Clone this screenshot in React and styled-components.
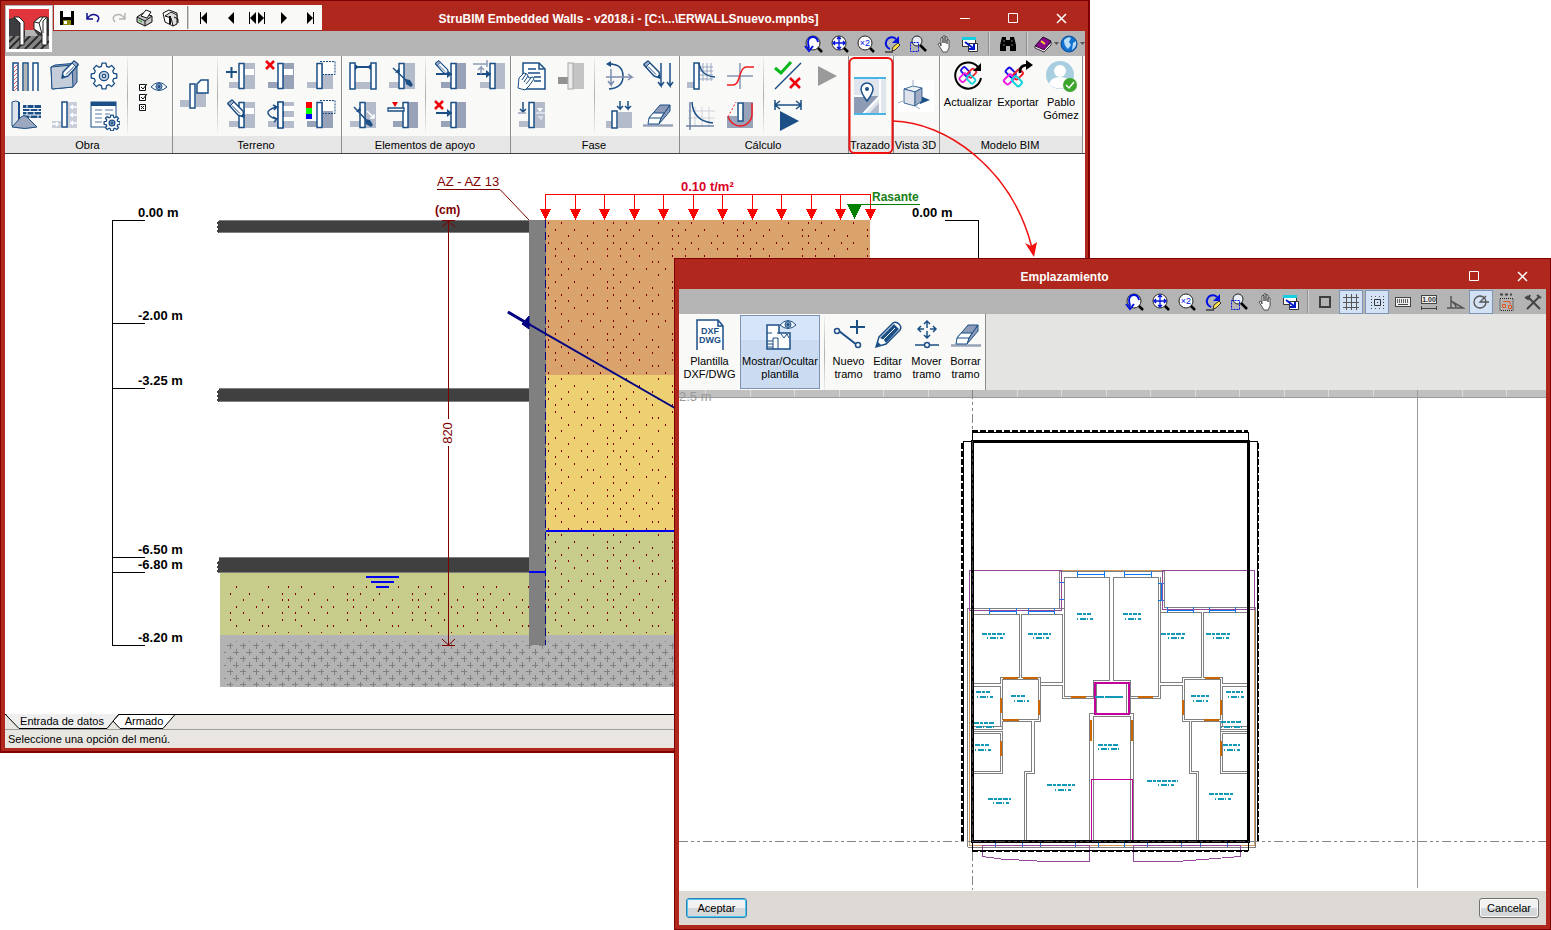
import React from 'react';
import styled, { createGlobalStyle } from 'styled-components';

const BLUE = '#1b4f86';
const SOIL = '#b4bbcb';
const DARK = '#98a3ba';

const GlobalStyle = createGlobalStyle`
  * {
    box-sizing: border-box;
  }
  body {
    margin: 0;
    background: #ffffff;
    color: #000000;
    font-family: "Liberation Sans", Arial, sans-serif;
    font-size: 11px;
    line-height: 13px;
  }
  button {
    font: inherit;
    color: inherit;
    background: none;
    border: 0;
    padding: 0;
  }
`

const Desktop = styled.div`
  position: relative;
  height: 100vh;
  min-height: 600px;
  overflow: hidden;
`

const Window = styled.section`
  position: absolute;
  display: flex;
  flex-direction: column;
  background: #b0281d;
  border: 1px solid #7f0000;
`

const MainWindow = styled(Window)`
  left: 0;
  top: 0;
  width: calc(100% - 461px);
  height: calc(100% - 177px);
  border-width: 1px 2px 2px 1px;
  padding: 4px 3px 3px 4px;
`

const DialogWindow = styled(Window)`
  left: 674px;
  right: 0;
  top: 258px;
  bottom: 0;
  padding: 0 4px 4px;
`

const MainHeader = styled.header`
  display: grid;
  grid-template-columns: 49px 1fr;
  grid-template-rows: 26px 25px;
  flex: none;
`

const AppButton = styled.button`
  grid-column: 1;
  grid-row: 1 / 3;
  z-index: 1;
  align-self: start;
  width: 48px;
  height: 48px;
  padding: 3px;
  background: #ffffff;
  border: 1px solid #b8b8b8;
  svg {
    display: block;
  }
`

const TitleRow = styled.div`
  grid-column: 2;
  grid-row: 1;
  display: flex;
`

const QuickAccess = styled.div`
  display: flex;
  align-items: center;
  height: 25px;
  background: #f9f9f7;
`

const Title = styled.h1`
  flex: 1;
  margin: 0;
  padding-top: 1px;
  padding-right: ${props => props.$inset || '0'};
  color: #ffffff;
  font-size: 12px;
  font-weight: bold;
  line-height: 26px;
  text-align: center;
  white-space: nowrap;
`

const WindowButton = styled.button`
  display: flex;
  align-items: center;
  justify-content: center;
  width: 48px;
  height: 26px;
  color: #ffffff;
`

const DialogTitle = styled.header`
  display: flex;
  align-items: center;
  flex: none;
  height: 30px;
  padding-top: 4px;
`

const ViewBar = styled.div`
  display: flex;
  align-items: center;
  justify-content: flex-end;
  flex: none;
  height: 25px;
  background: #b4b4b4;
`

const MainViewBar = styled(ViewBar)`
  grid-column: 1 / 3;
  grid-row: 2;
`

const SmallButton = styled.button`
  display: flex;
  align-items: center;
  justify-content: center;
  width: ${props => props.$wide ? '26px' : '24px'};
  height: 24px;
  margin: 0 ${props => props.$wide ? '0' : '1px'};
  border: 1px solid ${props => props.$on ? '#7d95b3' : 'transparent'};
  background: ${props => props.$on ? '#d3e1f4' : 'none'};
  svg {
    flex: none;
  }
`

const BarSeparator = styled.span`
  width: 2px;
  height: 23px;
  margin: 0 ${props => props.$gap || '3px'};
  background: linear-gradient(90deg, #8f8f8f 50%, #d0d0d0 50%);
`

const Ribbon = styled.nav`
  display: flex;
  flex: none;
  height: 98px;
  background: #f9f9f7;
  border-bottom: 1px solid #404040;
`

const Group = styled.div`
  display: flex;
  flex-direction: column;
  flex: none;
  width: ${props => props.$width};
  border-right: 1px solid #8c8c8c;
  box-shadow: inset 1px 0 0 #ffffff;
`

const GroupBody = styled.div`
  display: flex;
  justify-content: ${props => props.$center ? 'center' : 'flex-start'};
  height: 80px;
  padding: ${props => props.$center ? '0 2px 0 0' : '0 0 0 1px'};
`

const GroupLabel = styled.div`
  height: 17px;
  padding-right: 2px;
  background: #e6e6e6;
  line-height: 18px;
  text-align: center;
  white-space: nowrap;
`

const ToolGrid = styled.div`
  display: grid;
  grid-template-columns: repeat(${props => props.$cols}, 39px);
  grid-template-rows: ${props => props.$tall ? '78px' : '39px 39px'};
`

const ToolButton = styled.button`
  display: flex;
  align-items: center;
  justify-content: center;
`

const GroupSeparator = styled.span`
  width: 1px;
  height: 76px;
  margin: 1px 4px 0;
  background: linear-gradient(#f0f0f0, #b0b0b0 50%, #f0f0f0);
`

const CaptionButton = styled.button`
  display: flex;
  flex-direction: column;
  align-items: center;
  gap: 4px;
  width: ${props => props.$width || '39px'};
  padding-top: 3px;
  white-space: nowrap;
  border: 1px solid ${props => props.$on ? '#7c93b2' : 'transparent'};
  background: ${props => props.$on ? 'linear-gradient(#d6e5fa 33%, #cbdcf2 33%)' : 'none'};
`

const MainCanvas = styled.main`
  flex: 1;
  min-height: 0;
  background: #ffffff;
`

const TabRow = styled.div`
  display: flex;
  flex: none;
  height: 15px;
  background: #e9e6e1;
  border-top: 1px solid #000000;
`

const Tab = styled.button`
  position: relative;
  width: ${props => props.$width};
  height: 14px;
  margin-left: ${props => props.$overlap ? '-6px' : '0'};
  padding-bottom: 2px;
  line-height: 12px;
  white-space: nowrap;
`

const TabShape = styled.svg`
  position: absolute;
  left: 0;
  top: -1px;
`

const TabText = styled.span`
  position: relative;
`

const StatusBar = styled.footer`
  flex: none;
  height: 19px;
  padding-left: 3px;
  background: #e9e6e1;
  border-top: 1px solid #a0a0a0;
  line-height: 18px;
`

const DialogRibbon = styled.nav`
  display: flex;
  flex: none;
  height: 76px;
  background: #e4e4e2;
`

const DialogTools = styled.div`
  display: flex;
  padding: 1px 0;
  background: #f9f9f7;
  border-right: 1px solid #8c8c8c;
`

const DialogCanvas = styled.main`
  flex: 1;
  min-height: 0;
  background: #ffffff;
`

const DialogFooter = styled.footer`
  display: flex;
  align-items: center;
  justify-content: space-between;
  flex: none;
  height: 34px;
  padding: 0 7px;
  background: #dddad5;
`

const PushButton = styled.button`
  width: ${props => props.$primary ? '61px' : '60px'};
  height: 20px;
  border: 1px solid ${props => props.$primary ? '#2f7fb5' : '#707070'};
  border-radius: 3px;
  background: linear-gradient(#f2f2f2 50%, #d4d8da 50%);
  box-shadow: ${props => props.$primary ? 'inset 0 0 0 1px #49c8f2' : 'inset 0 0 0 1px #fafafa'};
`

const Drawing = styled.svg`
  display: block;
  width: 100%;
  height: 100%;
`

const DrawingText = styled.text`
  font-family: "Liberation Sans", Arial, sans-serif;
  font-size: ${props => props.$size || '13px'};
  font-weight: ${props => props.$bold ? 'bold' : 'normal'};
`

const Callout = styled.svg`
  position: absolute;
  left: 0;
  top: 0;
  pointer-events: none;
`

// ---- shared icon pieces, all on a 32 x 32 grid ----

function Section({ x = 13, soil = SOIL, band = true, ground = soil }) {
  return (
    <g>
      <rect x={x + 5} y="3" width="11" height="26" fill={soil} />
      {band && <rect x={x + 6} y="9" width="9" height="6" fill="#fff" />}
      <rect x={x - 10} y="22" width="10" height="6" fill={ground} />
      <rect x={x} y="3.500" width="5" height="25" fill="#fff" stroke={BLUE} strokeWidth="1.500" />
    </g>
  );
}

function Pencil() {
  return (
    <g stroke={BLUE} strokeLinejoin="round">
      <path d="M2 4L6 1L17 12L18 18L12 16L2 5Z" fill="#fff" strokeWidth="1.500" />
      <path d="M2 4L6 1L8 3L4 7Z" fill="#9dacc4" />
      <path d="M6 6.500L14 14.500" fill="none" />
      <path d="M18 18l-3-1l2-2z" fill={BLUE} />
    </g>
  );
}

function RedCross({ x = 1, y = 1, s = 8 }) {
  return <path d={`M${x} ${y}l${s} ${s}m0 ${-s}l${-s} ${s}`} stroke="#f0000b" strokeWidth="2.500" fill="none" />;
}

function Eye({ x, y }) {
  return (
    <g transform={`translate(${x} ${y})`}>
      <path d="M0 5Q8 -4 16 5Q8 12 0 5Z" fill="#fff" stroke={BLUE} />
      <circle cx="8" cy="4.500" r="3" fill="#8fa6c4" stroke={BLUE} />
      <circle cx="8" cy="4.500" r="1.500" fill={BLUE} />
    </g>
  );
}

function gearPath(cx, cy, r, depth) {
  const pts = [];
  for (let i = 0; i < 8; i++) {
    [[-15, r - depth], [-9, r], [9, r], [15, r - depth]].forEach(([a, rad]) => {
      const t = (i * 45 + a) * Math.PI / 180;
      pts.push(`${(cx + rad * Math.cos(t)).toFixed(1)} ${(cy + rad * Math.sin(t)).toFixed(1)}`);
    });
  }
  return `M${pts.join('L')}Z`;
}

function Gear({ cx = 16, cy = 16, r = 13, depth = 3 }) {
  return (
    <g fill="#fff" stroke={BLUE} strokeWidth="1.300" strokeLinejoin="round">
      <path d={gearPath(cx, cy, r, depth)} />
      <circle cx={cx} cy={cy} r={r * 0.36} fill="#c9d1df" />
      <circle cx={cx} cy={cy} r={r * 0.13} />
    </g>
  );
}

function Eraser() {
  return (
    <g stroke={BLUE} strokeWidth="1" strokeLinejoin="round">
      <path d="M1 26.500H31" stroke={DARK} strokeWidth="2.500" />
      <path d="M7 19L18 6H28L19 19Z" fill="#8d9ab8" />
      <path d="M19 19L28 6V12L17 25Z" fill="#8d9ab8" />
      <path d="M7 19L11 14H22L19 19L17 25H6Z" fill="#fff" />
      <path d="M7 19H19" />
    </g>
  );
}

function Knot() {
  return (
    <g fill="none" strokeWidth="2.200">
      <rect x="-5" y="-3" width="11" height="7" rx="2" transform="translate(13 10) rotate(45)" stroke="#1a12e6" />
      <rect x="-6" y="-3" width="11" height="7" rx="2" transform="translate(21 12) rotate(-45)" stroke="#f0202c" />
      <rect x="-5" y="-4" width="11" height="7" rx="2" transform="translate(11 19) rotate(-45)" stroke="#f01ae0" />
      <rect x="-6" y="-4" width="11" height="7" rx="2" transform="translate(20 21) rotate(45)" stroke="#10d4d8" />
    </g>
  );
}

function Lens({ children }) {
  return (
    <g>
      <path d="M13 13L18 18" stroke="#000" strokeWidth="2.500" />
      <circle cx="9" cy="9" r="7" fill="#fff" stroke="#222" />
      {children}
    </g>
  );
}

const line = { fill: 'none', stroke: BLUE, strokeWidth: 1.5 };

const icons = {
  piles: <>
    <path d="M3 31V3H8V31M13 31V3H18V31M23 31V3H28V31" fill="#fff" stroke={BLUE} strokeWidth="1.500" />
    <rect x="14" y="4" width="3" height="27" fill="#b5b5b5" />
    <path d="M4 8l3-3M4 12l3-3M4 16l3-3M4 20l3-3M4 24l3-3M4 28l3-3M4 31l3-3" stroke="#ef5350" />
  </>,
  panel: <>
    <path d="M2 7L6 5L28 3V22L24 27L3 29Z" fill="#8f9db8" stroke={BLUE} />
    <path d="M2 7L23 5L24 27L3 29Z" fill="#c5ccda" stroke={BLUE} />
    <g transform="translate(31 0) scale(-1 1)"><Pencil /></g>
  </>,
  gear: <Gear />,
  materials: <>
    <path d="M13 6H31V19H13Z" fill={BLUE} />
    <path d="M13 9.500H31M13 12.500H31M13 16H31M17 6v3M24 6v3M20 10v3M28 10v3M17 13v3M24 13v3M20 16v3M28 16v3" stroke="#fff" />
    <path d="M2 3Q6 1 9 3V27H2Z" fill="#dfe4ec" stroke={BLUE} />
    <path d="M9 3V27" stroke={BLUE} strokeWidth="2" />
    <path d="M2 28L11 18Q14 15 17 18L27 28Q15 31 2 28Z" fill="#9ba8bf" stroke={BLUE} />
  </>,
  rock: <>
    <path d="M18 3h10v26H18zM3 22h9v7H3z" fill="#c9cedb" />
    <path d="M28 8h-6l2-2m-2 2l2 2M28 16h-6l2-2m-2 2l2 2M28 24h-6l2-2m-2 2l2 2M3 25h6l-2-2m2 2l-2 2" fill="none" stroke="#fff" strokeWidth="1.500" />
    <rect x="13" y="3" width="5" height="25" fill="#fff" stroke={BLUE} strokeWidth="1.500" />
  </>,
  table: <>
    <rect x="3" y="3" width="25" height="25" fill="#fff" stroke={BLUE} />
    <rect x="3" y="3" width="25" height="4" fill={BLUE} />
    <path d="M7 11h7m3 0h8M7 15h7m3 0h5M7 19h7m3 0h3M7 23h7" stroke="#5779a4" />
    <Gear cx={24} cy={24} r={8} depth={2} />
  </>,
  options: <>
    <g fill="#fff" stroke="#111"><path d="M3.500 8.500h6v6h-6zM3.500 18.500h6v6h-6zM3.500 28.500h6v6h-6z" /></g>
    <path d="M5 11l2 2l4-5M5 21l2 2l4-5M5 30l3 3m0-3l-3 3" fill="none" stroke="#111" />
    <Eye x={15} y={6} />
  </>,
  wallPage: <>
    <path d="M18 12h10v16H18zM2 21h9v7H2z" fill={SOIL} />
    <rect x="12" y="5" width="5" height="24" fill="#fff" stroke={BLUE} strokeWidth="1.500" />
    <path d="M19 5l4-4h7v13H19z" fill="#fff" stroke={BLUE} strokeWidth="1.500" />
  </>,
  wallAdd: <><Section /><path d="M0 12h11M5.500 7v11" fill="none" stroke={BLUE} strokeWidth="2" /></>,
  wallDelete: <><Section soil={DARK} /><RedCross /></>,
  wallFrame: <><Section band={false} /><rect x="19" y="3" width="10" height="11" fill="#fff" /><path d="M16 1.500h15v13H19" fill="none" stroke={BLUE} strokeDasharray="2 1" /></>,
  wallEdit: <><Section /><Pencil /></>,
  wallArc: <><Section band={false} /><path d="M18 7h11v5H18zM18 18h11v4H18z" fill="#fff" /><rect x="13" y="3" width="5" height="26" fill="#fff" stroke={BLUE} strokeWidth="1.500" /><path d="M11 8Q2 11 3 14Q4 18 11 20M8 6l4 2l-3 3M8 18l4 2l-3 3" {...line} /></>,
  wallColor: <>
    <Section band={false} soil={DARK} /><rect x="19" y="3" width="10" height="9" fill="#fff" />
    <path d="M16 1.500h15v13H19" fill="none" stroke={BLUE} strokeDasharray="2 1" />
    <rect x="2" y="3" width="6" height="6" fill="#f00" /><rect x="2" y="9" width="6" height="6" fill="#0f0" /><rect x="2" y="15" width="6" height="5" fill="#00f" />
  </>,
  strut: <>
    <path d="M8 22h16v7H8z" fill={SOIL} />
    <path d="M8 7H24" stroke={BLUE} strokeWidth="2" /><path d="M8 4l4 3l-4 3M24 4l-4 3l4 3" fill={BLUE} />
    <rect x="3" y="3" width="5" height="26" fill="#fff" stroke={BLUE} strokeWidth="1.500" /><rect x="24" y="3" width="5" height="26" fill="#fff" stroke={BLUE} strokeWidth="1.500" />
  </>,
  anchor: <><Section band={false} /><path d="M7 8L24 24" fill="none" stroke={BLUE} strokeWidth="1.500" /><path d="M19 19l5 1l3 5l-2 2l-5-3zM14 12l-5 1l4-5z" fill={BLUE} /></>,
  anchorEdit: <><Section band={false} /><path d="M7 8L23 25" fill="none" stroke={BLUE} strokeWidth="1.500" /><path d="M18 20l5 1l3 5l-2 2l-5-3zM14 12l-5 1l4-5z" fill={BLUE} /><path d="M20 12l7 7m0-4v4h-4" fill="none" stroke="#fff" strokeWidth="1.500" /></>,
  slab: <><Section x={17} band={false} soil={DARK} /><path d="M2 9h16v3H2z" fill="#fff" stroke={BLUE} strokeWidth="1.300" /><path d="M6 3h6l-3 5z" fill="#e8000b" /></>,
  strutEdit: <><Section x={17} band={false} soil={DARK} /><path d="M2 14h16" fill="none" stroke={BLUE} strokeWidth="2" /><path d="M13 10l5 4l-5 4z" fill={BLUE} /><g transform="scale(.8)"><Pencil /></g></>,
  strutMove: <><Section x={17} band={false} /><path d="M4 14h14" fill="none" stroke={BLUE} strokeWidth="2" /><path d="M13 10l5 4l-5 4z" fill={BLUE} /><path d="M0 4h14M14 0v7M8 14V7l-3 3m3-3l3 3" fill="none" stroke="#8d9ab8" strokeWidth="1.500" /></>,
  strutDelete: <><Section x={17} band={false} soil={DARK} /><path d="M2 14h16" fill="none" stroke={BLUE} strokeWidth="2" /><path d="M13 10l5 4l-5 4z" fill={BLUE} /><RedCross y={2} /></>,
  phases: <>
    <path d="M7 3h16l6 6v20H7z" fill="#fff" stroke={BLUE} strokeWidth="1.500" /><path d="M23 3v6h6M12 9h8M12 13h12M18 17h7M18 21h7" {...line} />
    <path d="M2 28L3 18L8 13L11 14L13 18L17 17L18 19L13 26L9 30Z" fill="#fff" stroke={BLUE} /><path d="M6 20l4-6M8 22l4-6M10 24l5-6" stroke={BLUE} />
  </>,
  grayWall: <><path d="M18 3h11v26H18z" fill="#c4c4c4" /><path d="M3 17h10v7H3z" fill="#929292" /><rect x="13" y="3" width="5" height="26" fill="#ececec" stroke="#a6a6a6" /></>,
  water: <><Section x={13} band={false} /><path d="M7 3v10m-3-3l3 3l3-3" {...line} /><path d="M2 14h8" stroke={DARK} strokeWidth="1.500" /><path d="M20 14h9M22 18h5M24 20h2" stroke="#fff" /><path d="M21 9h6l-3 4z" fill="#fff" /></>,
  rotate: <><path d="M6 4Q20 4 20 16Q20 28 6 29M4 4h6" {...line} /><path d="M3 4l5-3v6z" fill={BLUE} /><path d="M3 17h26l-4-3m4 3l-4 3M8 9v16l-3-4m3 4l3-4" fill="none" stroke="#7d8fae" strokeWidth="1.500" /></>,
  loads: <><Pencil /><path d="M19 3v23l-3-4m3 4l3-4M28 3v23l-3-4m3 4l3-4" {...line} /></>,
  surcharge: <><path d="M15 13h14v16H15zM3 22h6v7H3z" fill={SOIL} /><rect x="9" y="12" width="5" height="17" fill="#fff" stroke={BLUE} strokeWidth="1.500" /><path d="M17 2v8l-3-3m3 3l3-3M25 2v8l-3-3m3 3l3-3" {...line} /></>,
  eraser: <Eraser />,
  pressure: <><path d="M14 3v18M18 3v18M22 3v18M26 3v18M12 7h16M12 11h16M12 15h16M12 19h16" stroke="#9ba8c0" /><path d="M2 22h8v6H2z" fill={SOIL} /><rect x="9" y="3" width="5" height="26" fill="#fff" stroke={BLUE} strokeWidth="1.500" /><path d="M14 3Q16 16 30 17" {...line} /></>,
  curve: <><path d="M16 3v26M3 16h26" stroke="#8597b5" strokeWidth="1.500" /><path d="M3 25h6Q13 25 15 18Q18 7 22 7h8" fill="none" stroke="#f11b20" strokeWidth="1.500" /></>,
  graph: <><path d="M10 8v20M17 8v20M24 8v20M3 12h27M3 19h27" stroke="#d0d3da" /><path d="M5 3v28M1 27h28" fill="none" stroke="#6d82a5" strokeWidth="1.500" /><path d="M7 3Q8 22 28 24" {...line} /></>,
  slip: <>
    <path d="M3 17H13V22H19V3H29V29H3Z" fill={DARK} />
    <path d="M14 4h5v18h-5z" fill="#fff" stroke={BLUE} strokeWidth="1.500" />
    <path d="M28 4V15A12 12 0 0 1 16 27Q8 27 4 18" fill="none" stroke="#f11b20" strokeWidth="1.500" />
    <path d="M4 18L12 3" stroke="#f11b20" strokeDasharray="2 2" />
  </>,
  check: <><path d="M3 29L29 3" stroke={BLUE} strokeWidth="1.500" /><path d="M3 8l6 5L19 2" fill="none" stroke="#08b81b" strokeWidth="3" /><RedCross x={18} y={18} s={10} /></>,
  play: <path d="M7 6L26 16L7 26Z" fill="#9a9a9a" />,
  calc: <><path d="M8 12L27 22L8 32Z" fill={BLUE} /><path d="M3 1v10M29 1v10M3 6h26M8 2l-5 4l5 4M24 2l5 4l-5 4" {...line} /></>,
  map: <>
    <rect width="32" height="38" fill="#dfe4ed" />
    <path d="M0 19H24V21L8 38H0Z" fill="#8e9bb5" />
    <path d="M14 38L25 26V38Z" fill="#b3bccd" />
    <path d="M26 2V38M25 20L9 37M0 19H13" fill="none" stroke="#fff" strokeWidth="2" />
    <path d="M0 1h32M0 37h32" stroke="#4bb4e6" strokeWidth="2" />
    <path d="M13 24Q7 16 7 12A6 6 0 0 1 19 12Q19 16 13 24Z" fill="#fff" stroke={BLUE} strokeWidth="1.500" /><circle cx="13" cy="12" r="2" fill={BLUE} />
  </>,
  cube: <>
    <rect width="36" height="32" fill="#fff" /><path d="M20 15l12 5l-10 4z" fill={BLUE} />
    <g stroke={BLUE} strokeWidth=".8"><path d="M6 9l9-3l9 2l-7 4z" fill="#eef1f6" /><path d="M6 9l11 3v14L6 23z" fill="#dfe3eb" /><path d="M24 8v13l-7 5V12z" fill="#9facc4" /></g>
    <path d="M15 0v5M0 23l5-2M17 26l5 3" stroke="#9facc4" />
  </>,
  update: <><g transform="translate(3 3) scale(.8)"><Knot /></g><path d="M26 7A13 13 0 1 0 29 18" fill="none" stroke="#000" strokeWidth="2" /><path d="M29 3v8h-8z" /></>,
  exportModel: <><g transform="translate(-3 3) scale(.9)"><Knot /></g><path d="M18 13Q17 5 26 5" fill="none" stroke="#000" strokeWidth="2.500" /><path d="M24 0l7 5l-7 5z" /></>,
  user: <>
    <circle cx="15" cy="15" r="14" fill="#a8cfe0" /><circle cx="15" cy="11" r="6" fill="#fff" /><path d="M4 24Q6 17 15 17T26 24Q15 33 4 24Z" fill="#fff" />
    <circle cx="25" cy="25" r="7" fill="#3da52d" /><path d="M21 25l3 3l5-6" fill="none" stroke="#fff" strokeWidth="1.500" />
  </>,
  dxf: <>
    <path d="M3 31V1H24L29 7V31" fill="#fff" stroke={BLUE} strokeWidth="1.500" /><path d="M24 1v6h5" {...line} />
    <text x="16" y="15" textAnchor="middle" fontFamily="Liberation Sans" fontWeight="bold" fontSize="9" fill={BLUE}>DXF</text>
    <text x="16" y="24" textAnchor="middle" fontFamily="Liberation Sans" fontWeight="bold" fontSize="9" fill={BLUE}>DWG</text>
  </>,
  plan: <><path d="M3 6h12v8h11v16H3z" fill="#fff" stroke={BLUE} strokeWidth="1.500" /><path d="M3 14h5M13 14h3M3 22h6v-3h5v11M9 22v8M3 25h6M3 28h6M17 15l3 4l3-4l2 4" fill="none" stroke={BLUE} /><Eye x={16} y={1} /></>,
  newLine: <><path d="M6 12L24 26" stroke={BLUE} strokeWidth="2" /><circle cx="4" cy="12" r="2.500" fill="#fff" stroke={BLUE} strokeWidth="1.500" /><circle cx="25" cy="26" r="2.500" fill="#fff" stroke={BLUE} strokeWidth="1.500" /><path d="M24 1v14M17 8h15" stroke={BLUE} strokeWidth="2" /></>,
  pencil: <>
    <path d="M4 28L7 18L21 4Q24 2 27 5T28 11L14 25Z" fill="#fff" stroke={BLUE} strokeWidth="1.500" />
    <path d="M22 5L27 10L14 24L12 21L8 19Z" fill={BLUE} />
    <path d="M23 9L11 21" stroke="#fff" /><path d="M4 28l2-5l3 3z" fill={BLUE} />
  </>,
  move: <><path d="M16 2v7M16 12v7M7 10h6M19 10h6M13 5l3-3l3 3M13 16l3 3l3-3M10 7l-3 3l3 3M22 7l3 3l-3 3M4 26h9M19 26h9" {...line} /><circle cx="16" cy="26" r="2.500" {...line} /></>,
};

const smallIcons = {
  save: <><path d="M3 3h14v14H3z" fill="#000" /><path d="M6 3h8v6H6z" fill="#fff" /><path d="M6 12h8v5H6z" fill="#8a8a00" /><path d="M7 13h3v3H7z" fill="#fff" /></>,
  undo: <path d="M4 5v6h6M4 11Q8 5 13 7T14 14" fill="none" stroke="#101090" strokeWidth="1.500" />,
  redo: <path d="M16 5v6h-6M16 11Q12 5 7 7T6 14" fill="none" stroke="#b5b5b5" strokeWidth="1.500" />,
  printer: <g stroke="#111"><path d="M2 9l6-4l9 3v6l-7 4l-8-4z" fill="#c4c4c4" /><path d="M6 8l5-6l5 2l-4 6z" fill="#fff" /><path d="M2 9l8 4l7-5M10 13v5" fill="none" /><path d="M4 12l3 2" stroke="#0b0" /></g>,
  preview: <g stroke="#111" fill="#fff"><path d="M2 5l6-3l8 3v9l-4 4l-8-4z" /><path d="M4 8l6-4l6 3v9l-4 2l-2-8z" fill="#ddd" /><path d="M13 9l4 2v4" fill="none" /><path d="M9 8v8" strokeWidth="2" /></g>,
  first: <path d="M5 4h1v12H5zM12 4v12l-6-6z" />,
  prev: <path d="M13 4v12l-6-6z" />,
  middle: <path d="M2 4h1v12H2zM9 4v12l-6-6zM11 4v12l6-6zM17 4h1v12h-1z" />,
  next: <path d="M8 4v12l6-6z" />,
  last: <path d="M8 4v12l6-6zM14 4h1v12h-1z" />,
  zoomPrev: <Lens><path d="M5 14Q2 3 9 3Q13 3 14 8M1 12l4 5l4-5" fill="none" stroke="#0010e0" strokeWidth="2" /></Lens>,
  zoomAll: <Lens><path d="M9 3v12M3 9h12M7 5l2-2l2 2M7 13l2 2l2-2M5 7l-2 2l2 2M13 7l2 2l-2 2" fill="none" stroke="#0010e0" strokeWidth="1.300" /></Lens>,
  zoomTwo: <Lens><text x="9" y="12" textAnchor="middle" fontFamily="Liberation Sans" fontSize="9" fill="#0010e0">×2</text></Lens>,
  redraw: <><path d="M8 15A6 6 0 1 1 14 5" fill="none" stroke="#0010e0" strokeWidth="2" /><path d="M17 2v7h-7z" fill="#0010e0" /><path d="M10 17l1-4l5-4l2 2l-5 5z" fill="#ffe34a" stroke="#333" /><path d="M3 18h8" stroke="#000" /></>,
  zoomArea: <><path d="M12 11L18 17" stroke="#000" strokeWidth="2.500" /><circle cx="9" cy="7" r="5" fill="#e7eef8" stroke="#222" /><path d="M2.500 8.500h8v9h-8z" fill="none" stroke="#0010e0" strokeDasharray="2 1" /></>,
  hand: <path d="M4 10l2-1l1 3V4q1-2 2 0v5V2q1-1 2 0v7V3q1-1 2 0v7V6q1-1 2 0v8l-2 4H9z" fill="#fff" stroke="#333" strokeWidth=".8" />,
  windows: <><path d="M2.500 3.500h13v9h-13z" fill="#fff" stroke="#333" /><path d="M2 3h14v3H2z" fill="#15cfe0" /><path d="M8.500 9.500h9v8h-9z" fill="#fff" stroke="#333" /><path d="M5 8l8 6m1-4v5H9" fill="none" stroke="#0018c8" strokeWidth="2" /></>,
  binoculars: <><path d="M4 3h4v3h4V3h4l2 8v6h-6v-5H8v5H2v-6z" fill="#000" /><path d="M6 6v8M14 6v8" stroke="#777" strokeDasharray="2 2" /></>,
  book: <><path d="M1 12L9 3l8 4l-7 10z" fill="#8a0a8e" stroke="#200020" /><path d="M1 12l9 4l7-8v3l-7 7l-9-4z" fill="#fff" stroke="#200020" strokeWidth=".8" /><path d="M7 7l4 3" stroke="#f6d32d" strokeWidth="2" /></>,
  globe: <><circle cx="9" cy="10" r="8" fill="#1272cf" stroke="#0d4f99" /><path d="M4 6q4-4 7-2l-2 4l2 3l-3 4q-4-3-4-9zM13 9l3-2q1 6-4 9z" fill="#b9def7" /></>,
  square: <path d="M5 5h10v10H5z" fill="none" stroke="#3f3f3f" strokeWidth="2" />,
  grid: <path d="M5.500 2v16M10.500 2v16M15.500 2v16M2 5.500h16M2 10.500h16M2 15.500h16" stroke="#555" />,
  snap: <><path d="M7.500 7.500h6v6h-6z" fill="none" stroke="#333" /><path d="M4 4.500h14M4 16.500h14" stroke="#555" strokeDasharray="1 3" /><path d="M4 10.500h1M16 10.500h1M10 10.500h1M4 7.500h1M16 7.500h1M4 13.500h1M16 13.500h1" stroke="#333" /></>,
  keyboard: <><rect x="2.500" y="5.500" width="15" height="9" fill="#eee" stroke="#444" /><path d="M4 8h12M4 10h12" stroke="#333" strokeWidth="1.500" strokeDasharray="1 1" /><path d="M5 12.500h10" stroke="#444" /></>,
  measure: <><rect x="2.500" y="3.500" width="15" height="8" fill="#eee" stroke="#444" /><text x="10" y="10" textAnchor="middle" fontFamily="Liberation Sans" fontWeight="bold" fontSize="7" fill="#333">1.00</text><path d="M2.500 14v4M17.500 14v4M2 16.500h16" stroke="#444" /></>,
  angle: <path d="M6 4v12h12L6 9M2 16h5M11 16q0-4-3-5" fill="none" stroke="#555" strokeWidth="1.500" />,
  polar: <><circle cx="9" cy="10" r="6" fill="none" stroke="#555" strokeWidth="1.300" /><path d="M18 10H9l6-6" fill="none" stroke="#555" strokeWidth="1.300" /></>,
  region: <><path d="M3 6.500h13v12h-13z" fill="none" stroke="#222" strokeDasharray="1 1" /><path d="M3 2.500h12" fill="none" stroke="#444" strokeWidth="2" strokeDasharray="3 2" /><path d="M6 9.500h7v3M5.500 12.500h3v3h-3zM11.500 13.500h3v3h-3z" fill="none" stroke="#e2561f" /></>,
  tools: <path d="M4 4l13 13M4 17L17 4M2 5l3 2l2-4M14 3l4 3" fill="none" stroke="#444" strokeWidth="2" />,
};

function Icon({ name, width = 32, height = 32 }) {
  return <svg width={width} height={height} viewBox={`0 0 ${width} ${height}`} aria-hidden="true">{icons[name]}</svg>;
}

function SmallIcon({ name }) {
  return <svg width="20" height="20" viewBox="0 0 20 20" aria-hidden="true">{smallIcons[name]}</svg>;
}

function SmallTool({ name, label, on, menu }) {
  return (
    <SmallButton $on={on} $wide={menu} aria-label={label}>
      <SmallIcon name={name} />
      {menu && <svg width="5" height="3" aria-hidden="true"><path d="M0 0h5l-2.500 3z" fill="#555" /></svg>}
    </SmallButton>
  );
}

function ViewTools() {
  return (
    <>
      <SmallTool name="zoomPrev" label="Vista previa" />
      <SmallTool name="zoomAll" label="Ventana completa" />
      <SmallTool name="zoomTwo" label="Zoom doble" />
      <SmallTool name="redraw" label="Redibujar" />
      <SmallTool name="zoomArea" label="Marcar zoom" />
      <SmallTool name="hand" label="Mover la imagen" />
      <SmallTool name="windows" label="Imprimir vista" />
    </>
  );
}

function Tools({ names, cols, tall }) {
  return (
    <ToolGrid $cols={cols} $tall={tall}>
      {names.map(name => (
        <ToolButton key={name} aria-label={name}><Icon name={name} height={name === 'options' ? 38 : 32} /></ToolButton>
      ))}
    </ToolGrid>
  );
}

function Logo() {
  return (
    <svg width="40" height="40" viewBox="0 0 40 40" aria-hidden="true">
      <rect width="40" height="40" fill="#e0353b" />
      <path d="M0 10L6 8L13 14V22H25V12L31 8L40 9V40H0Z" fill="#3b3d40" />
      <path d="M0 27H40V40H0Z" fill="#858585" />
      <path d="M0 33l6-6M0 40l13-13M8 40l13-13M16 40l13-13M24 40l13-13M32 40l8-8" stroke="#2a2a2a" strokeWidth="2" />
      <path d="M16 21h9l4 6H16z" fill="#b5b5b5" />
      <path d="M5 8h5l5 5v23h-4V14z" fill="#fff" stroke="#222" />
      <path d="M31 8h7v28h-5V25l-8-5v-7z" fill="#fff" stroke="#222" />
      <path d="M25 13l5 1l3 11M30 14l4-6M34 24V12l4-4" fill="none" stroke="#222" />
    </svg>
  );
}

const levels = [
  { y: 220, text: '0.00 m' },
  { y: 323, text: '-2.00 m' },
  { y: 388, text: '-3.25 m' },
  { y: 557, text: '-6.50 m' },
  { y: 572, text: '-6.80 m' },
  { y: 645, text: '-8.20 m' },
];

const slabs = [[220, 13], [388, 14], [557, 16]];

const grains = [
  [0, [3, 16, 48]], [7, [10, 29, 62]], [13, [3, 23, 42, 62]], [20, [3, 16, 36, 48]],
  [26, [10, 23, 42, 62]], [33, [10, 29, 62]], [39, [16, 42, 48]], [46, [3, 23, 36, 55]],
];

function SectionDrawing() {
  return (
    <Drawing role="img" aria-label="Sección del muro">
      <defs>
        <pattern id="grain" x="220" y="586" width="65" height="52" patternUnits="userSpaceOnUse">
          {grains.map(([y, xs]) => xs.map(x => <rect key={`${x}-${y}`} x={x} y={y} width="1" height="2" fill="#800000" />))}
        </pattern>
        <pattern id="rocks" x="223" y="642" width="13" height="13" patternUnits="userSpaceOnUse">
          <path d="M4 3.500h6M7.500 1v6M0 10.500h3M10 10.500h3M.500 7v6" stroke="#808080" />
        </pattern>
      </defs>
      <g transform="translate(-5 -154)" shapeRendering="crispEdges">
        <rect x="545" y="220" width="325" height="155" fill="#d9a36b" />
        <rect x="545" y="375" width="325" height="156" fill="#ecd071" />
        <rect x="545" y="531" width="325" height="104" fill="#c8cc8a" />
        <rect x="220" y="572" width="310" height="63" fill="#c8cc8a" />
        <rect x="545" y="222" width="325" height="411" fill="url(#grain)" />
        <rect x="225" y="584" width="304" height="49" fill="url(#grain)" />
        <rect x="220" y="635" width="650" height="52" fill="#b3b3b3" />
        <rect x="224" y="641" width="646" height="46" fill="url(#rocks)" />
        <rect x="545" y="530" width="325" height="2" fill="#0000f0" />

        {slabs.map(([y, h]) => (
          <g key={y}>
            <path d={`M219 ${y}H530V${y + h}H219l-3 -2l3 -2l-3 -2l3 -2l-3 -2l3 -2Z`} fill="#404040" />
            <path d={`M219 ${y + .5}H530M219 ${y + h - .5}H530`} stroke="#808080" />
          </g>
        ))}

        <rect x="529" y="220" width="17" height="425" fill="#808080" />
        <path d="M545.500 220V645" stroke="#000080" strokeDasharray="8 4" />
        <rect x="529" y="571" width="17" height="2" fill="#0000f0" />
        <path d="M366 577H399M371 582H394M376 587H389" stroke="#0000f0" strokeWidth="2" />

        <path d="M112.500 220V646M978.500 220V400M945 220.500H979" stroke="#000" />
        {levels.map(({ y, text }) => (
          <g key={text}>
            <path d={`M112 ${y + .5}H145`} stroke="#000" />
            <DrawingText $bold x="138" y={y - 3}>{text}</DrawingText>
          </g>
        ))}
        <DrawingText $bold x="912" y="217">0.00 m</DrawingText>

        <g stroke="#800000" fill="none">
          <path d="M448.500 220V419M448.500 446V645M442 220.500H455M442 645.500H455" />
          <path d="M442 227L448.500 221L455 227M442 639L448.500 645L455 639M437 189.500H500L529 220" shapeRendering="auto" />
        </g>
        <DrawingText fill="#800000" x="437" y="186">AZ - AZ 13</DrawingText>
        <DrawingText $bold $size="12px" fill="#800000" x="435" y="214">(cm)</DrawingText>
        <DrawingText fill="#800000" textAnchor="middle" transform="translate(452 433) rotate(-90)">820</DrawingText>

        <path d="M545 194.500H871" stroke="#f00" />
        {Array.from({ length: 12 }, (_, i) => Math.round(545 + i * 29.5)).map(x => (
          <g key={x}>
            <path d={`M${x + .5} 194V210`} stroke="#f00" />
            <path d={`M${x - 5} 209H${x + 6}L${x + .5} 220Z`} fill="#f00" />
          </g>
        ))}
        <DrawingText $bold fill="#dc0028" x="681" y="191">0.10 t/m²</DrawingText>
        <path d="M847 204H862L854.500 219Z" fill="#008000" />
        <path d="M854 204.500H920" stroke="#008000" />
        <DrawingText $bold $size="12px" fill="#168016" x="872" y="201">Rasante</DrawingText>

        <g shapeRendering="auto" stroke="#000080" fill="#000080">
          <path d="M508 312L680 411" strokeWidth="2" />
          <path d="M508 312L530 325" strokeWidth="3" />
          <path d="M522 324L529 316V329Z" />
        </g>
      </g>
    </Drawing>
  );
}

// name row, then area row of each room: x, y, width
const roomMarks = [
  [982, 634, 23, 987, 638, 16], [1028, 634, 23, 1033, 638, 16], [1077, 614, 15, 1077, 619, 16],
  [1123, 614, 18, 1125, 619, 16], [1161, 634, 25, 1168, 638, 16], [1206, 634, 25, 1213, 638, 16],
  [976, 692, 15, 977, 697, 16], [1011, 696, 15, 1014, 701, 15], [974, 723, 20, 973, 727, 22],
  [975, 745, 15, 975, 750, 16], [1095, 697, 28, 1095, 697, 28], [1098, 745, 21, 1098, 749, 22],
  [1047, 785, 28, 1055, 790, 16], [988, 799, 23, 993, 803, 16], [1147, 781, 31, 1158, 785, 16],
  [1191, 696, 18, 1193, 701, 15], [1226, 692, 17, 1228, 697, 16], [1221, 722, 20, 1221, 727, 22],
  [1223, 745, 17, 1224, 750, 16], [1209, 794, 25, 1215, 799, 16],
];

function PlanDrawing() {
  return (
    <Drawing role="img" aria-label="Planta del emplazamiento">
      <rect width="100%" height="8" fill="#c0c0c0" />
      <path d="M0 7.500H3000" stroke="#999" />
      <g transform="translate(-679 -390)" shapeRendering="crispEdges">
        {Array.from({ length: 19 }, (_, i) => Math.round(705 + i * 44.5)).map(x => (
          <rect key={x} x={x} y="390" width="1" height="7" fill="#dcdcdc" />
        ))}
        <DrawingText fill="#999" x="679" y="401">2.5 m</DrawingText>

        <g fill="none" stroke="#808080">
          <path d="M967.500 847V608.500H1059.500V571.500H1164.500V607.500H1255.500V847.500H967.500" />
          <path d="M974 614.500H1019.500V677.500M1062.500 614.500H1021.500V677.500M1062.500 614V682.500H1040.500M1059 608.500H1064" />
          <path d="M1064.500 696.500V577.500H1109.500V680.500H1093.500V698.500M1113.500 680.500V577.500H1158.500V696.500M1113 680.500H1130.500V713" />
          <path d="M1160.500 577V682.500H1182.500V677.500H1201.500V612.500H1160M1248 612.500H1203.500V677.500H1222.500V683.500H1248M1248 686.500H1222.500V726" />
          <path d="M973 683.500H1000.500V677.500H1019.500M1021.500 677.500H1040.500V721.500H1034.500V773.500H1026.500V841M1040.500 685.500H1062.500V698.500H1093M1064 696.500H1093" />
          <path d="M1002.500 679.500H1038.500V719.500H1002.500ZM1184.500 679.500H1220.500V719.500H1184.500Z" />
          <path d="M973 686.500H1000.500V726M1002.500 730V721.500H1031.500V771.500H1024.500V841M973 726.500H1002M973 729.500H1002M973 731.500H1002.500V773.500H973M973 733.500H1000.500V771.500H973" />
          <path d="M1130 698.500H1160.500V685.500H1182.500V721.500H1189.500V773.500H1196.500V841M1130 696.500H1158M1220.500 721.500H1191.500V771.500H1198.500V841" />
          <path d="M1220.500 721V773.500H1248M1248 771.500H1222.500V733.500H1248M1221 726.500H1248M1221 729.500H1248M1221 731.500H1248" />
          <path d="M1096.500 683.500H1126.500V713.500H1096.500ZM1089.500 841V713.500H1133.500V841M1093.500 841V716.500H1130.500V841" />
        </g>
        <path d="M1061 570.500H1163M969.500 610V845.500H1254.500V609" fill="none" stroke="#d09a60" />
        <g stroke="#cc6600" strokeWidth="2" fill="none">
          <path d="M1003 678H1018M1023 678H1038M1003 720H1019M1205 678H1220M1204 720H1219M1071 697H1086M1138 697H1153" />
          <path d="M1001 698V713M1039 700V715M1001 741V756M1183 700V715M1221 700V715M1221 741V756M1091 720V741M1132 720V741" />
        </g>
        <g stroke="#0a78f0" fill="none">
          <path d="M989 611.500H1017M989.500 608V614M1016.500 608V614M1028 611.500H1055M1028.500 608V614M1054.500 608V614" />
          <path d="M1077 574.500H1105M1077.500 571V577M1104.500 571V577M1124 574.500H1152M1124.500 571V577M1151.500 571V577" />
          <path d="M1167 610.500H1194M1167.500 607V613M1193.500 607V613M1209 610.500H1236M1209.500 607V613M1235.500 607V613" />
          <path d="M1059 582.500H1064M1059 599.500H1064M1158 583.500H1164M1158 600.500H1164M1161.500 583V600" />
          {[995, 1022, 1040, 1075, 1098, 1124, 1147, 1181, 1200, 1227].map(x => <path key={x} d={`M${x + .5} 843V847`} />)}
        </g>
        <g stroke="#944a9c" fill="none">
          <path d="M969.500 570.500H1061.500V610.500H969.500ZM1162.500 570.500H1254.500V609.500H1162.500Z" />
          <path d="M1089.500 845.500H982.500V856.500L1001 859L1046 861.500H1089.500ZM1133.500 845.500H1240.500V856.500L1209 859L1177 861.500H1133.500Z" />
        </g>
        <g stroke="#c4009c" fill="none">
          <path d="M1091.500 841V779.500H1132.500V841" />
          <path d="M1095 683H1129V714H1095Z" strokeWidth="2" />
        </g>
        <g stroke="#1398b8" fill="none">
          {roomMarks.map(([x, y, w, x2, y2, w2]) => (
            <g key={`${x}-${y}`}>
              <path d={`M${x} ${y}h${w}`} strokeWidth="2" strokeDasharray="5 1 3 1 4 1" />
              <path d={`M${x2} ${y2}h${w2}`} strokeWidth="2" strokeDasharray="1 2 6 1" />
            </g>
          ))}
        </g>

        <g stroke="#000" fill="none">
          <path d="M972.500 441.500H1248.500V841.500H972.500Z" strokeWidth="3" />
          <path d="M972.500 441V432.500H1248.500V441M972 441.500H963.500V841M1249 441.500H1257.500V841M972.500 842V850.500H1248.500V842" />
          <path d="M972 431H1248M962 443V841M1258 443V841M972 851H1248" strokeWidth="2" strokeDasharray="6 2" />
        </g>
        <g stroke="#858585" strokeDasharray="9 3 3 3 3 3">
          <path d="M972.500 390V430M972.500 852V890" />
          <path d="M679 841.500H971M1250 841.500H3000" />
        </g>
        <path d="M972.500 441V841M972 841.500H1249" stroke="#444" strokeDasharray="9 3 3 3 3 3" />
        <path d="M1417.500 390V888" stroke="#999" />
      </g>
    </Drawing>
  );
}

function App() {
  return (
    <Desktop>
      <GlobalStyle />
      <MainWindow>
        <MainHeader>
          <AppButton aria-label="Archivo"><Logo /></AppButton>
          <TitleRow>
            <QuickAccess>
              <SmallTool name="save" label="Guardar" />
              <SmallTool name="undo" label="Deshacer" />
              <SmallTool name="redo" label="Rehacer" />
              <SmallTool name="printer" label="Imprimir" />
              <SmallTool name="preview" label="Planos" />
              <BarSeparator />
              <SmallTool name="first" label="Primera fase" />
              <SmallTool name="prev" label="Fase anterior" />
              <SmallTool name="middle" label="Ir a fase" />
              <SmallTool name="next" label="Fase siguiente" />
              <SmallTool name="last" label="Última fase" />
            </QuickAccess>
            <Title $inset="6px">StruBIM Embedded Walls - v2018.i - [C:\...\ERWALLSnuevo.mpnbs]</Title>
            <WindowButton aria-label="Minimizar"><svg width="11" height="11"><path d="M0 5.500H10" stroke="#fff" /></svg></WindowButton>
            <WindowButton aria-label="Maximizar"><svg width="11" height="11"><path d="M.500.500H9.500V9.500H.500Z" fill="none" stroke="#fff" /></svg></WindowButton>
            <WindowButton aria-label="Cerrar"><svg width="11" height="11"><path d="M1 1L10 10M10 1L1 10" stroke="#fff" strokeWidth="1.500" /></svg></WindowButton>
          </TitleRow>
          <MainViewBar>
            <ViewTools />
            <BarSeparator $gap="5px" />
            <SmallTool name="binoculars" label="Buscar" />
            <BarSeparator $gap="5px" />
            <SmallTool name="book" label="Ayuda" menu />
            <SmallTool name="globe" label="Web" menu />
          </MainViewBar>
        </MainHeader>

        <Ribbon>
          <Group $width="168px">
            <GroupBody>
              <Tools cols={3} names={['piles', 'panel', 'gear', 'materials', 'rock', 'table']} />
              <GroupSeparator />
              <Tools cols={1} tall names={['options']} />
            </GroupBody>
            <GroupLabel>Obra</GroupLabel>
          </Group>
          <Group $width="169px">
            <GroupBody>
              <Tools cols={1} tall names={['wallPage']} />
              <GroupSeparator />
              <Tools cols={3} names={['wallAdd', 'wallDelete', 'wallFrame', 'wallEdit', 'wallArc', 'wallColor']} />
            </GroupBody>
            <GroupLabel>Terreno</GroupLabel>
          </Group>
          <Group $width="169px">
            <GroupBody>
              <Tools cols={2} names={['strut', 'anchor', 'anchorEdit', 'slab']} />
              <GroupSeparator />
              <Tools cols={2} names={['strutEdit', 'strutMove', 'strutDelete']} />
            </GroupBody>
            <GroupLabel>Elementos de apoyo</GroupLabel>
          </Group>
          <Group $width="169px">
            <GroupBody>
              <Tools cols={2} names={['phases', 'grayWall', 'water']} />
              <GroupSeparator />
              <Tools cols={2} names={['rotate', 'loads', 'surcharge', 'eraser']} />
            </GroupBody>
            <GroupLabel>Fase</GroupLabel>
          </Group>
          <Group $width="169px">
            <GroupBody>
              <Tools cols={2} names={['pressure', 'curve', 'graph', 'slip']} />
              <GroupSeparator />
              <Tools cols={2} names={['check', 'play', 'calc']} />
            </GroupBody>
            <GroupLabel>Cálculo</GroupLabel>
          </Group>
          <Group $width="45px">
            <GroupBody $center>
              <ToolButton aria-label="Trazado"><Icon name="map" height={38} /></ToolButton>
            </GroupBody>
            <GroupLabel>Trazado</GroupLabel>
          </Group>
          <Group $width="46px">
            <GroupBody $center>
              <ToolButton aria-label="Vista 3D"><Icon name="cube" width={36} /></ToolButton>
            </GroupBody>
            <GroupLabel>Vista 3D</GroupLabel>
          </Group>
          <Group $width="143px">
            <GroupBody>
              <CaptionButton $width="54px"><Icon name="update" /><span>Actualizar</span></CaptionButton>
              <CaptionButton $width="46px"><Icon name="exportModel" /><span>Exportar</span></CaptionButton>
              <CaptionButton $width="40px"><Icon name="user" /><span>Pablo<br />Gómez</span></CaptionButton>
            </GroupBody>
            <GroupLabel>Modelo BIM</GroupLabel>
          </Group>
        </Ribbon>

        <MainCanvas>
          <SectionDrawing />
        </MainCanvas>

        <TabRow>
          <Tab $width="114px">
            <TabShape width="114" height="15"><path d="M1 0L14 14.500H102L114 0" fill="#efefef" /><path d="M0 0L14 14.500H102L114 0" fill="none" stroke="#000" /></TabShape>
            <TabText>Entrada de datos</TabText>
          </Tab>
          <Tab $width="62px" $overlap>
            <TabShape width="62" height="15"><path d="M6 .500L0 7L7 14.500H50L62 .500Z" fill="#fff" stroke="#000" /></TabShape>
            <TabText>Armado</TabText>
          </Tab>
        </TabRow>
        <StatusBar>Seleccione una opción del menú.</StatusBar>
      </MainWindow>

      <Callout width="1100" height="260">
        <rect x="849.500" y="58" width="43" height="95" rx="5" fill="none" stroke="#f01010" strokeWidth="2" />
        <path d="M893 121C945 122 1012 168 1032 248" fill="none" stroke="#f01010" strokeWidth="1.500" />
        <path d="M1034 257L1025 243L1031 246L1037 242Z" fill="#f01010" />
      </Callout>

      <DialogWindow role="dialog" aria-label="Emplazamiento">
        <DialogTitle>
          <Title as="h2">Emplazamiento</Title>
          <WindowButton aria-label="Maximizar"><svg width="11" height="11"><path d="M.500.500H9.500V9.500H.500Z" fill="none" stroke="#fff" /></svg></WindowButton>
          <WindowButton aria-label="Cerrar"><svg width="11" height="11"><path d="M1 1L10 10M10 1L1 10" stroke="#fff" strokeWidth="1.500" /></svg></WindowButton>
        </DialogTitle>
        <ViewBar>
          <ViewTools />
          <BarSeparator />
          <SmallTool name="square" label="Ortogonal" />
          <SmallTool name="grid" label="Rejilla" on />
          <SmallTool name="snap" label="Captura" on />
          <SmallTool name="keyboard" label="Teclado" />
          <SmallTool name="measure" label="Medir" />
          <SmallTool name="angle" label="Ángulo" />
          <SmallTool name="polar" label="Rastreo" on />
          <SmallTool name="region" label="Plantillas" />
          <SmallTool name="tools" label="Configuración" />
        </ViewBar>
        <DialogRibbon>
          <DialogTools>
            <CaptionButton $width="61px"><Icon name="dxf" /><span>Plantilla<br />DXF/DWG</span></CaptionButton>
            <CaptionButton $width="80px" $on><Icon name="plan" /><span>Mostrar/Ocultar<br />plantilla</span></CaptionButton>
            <GroupSeparator />
            <CaptionButton><Icon name="newLine" /><span>Nuevo<br />tramo</span></CaptionButton>
            <CaptionButton><Icon name="pencil" /><span>Editar<br />tramo</span></CaptionButton>
            <CaptionButton><Icon name="move" /><span>Mover<br />tramo</span></CaptionButton>
            <CaptionButton><Icon name="eraser" /><span>Borrar<br />tramo</span></CaptionButton>
          </DialogTools>
        </DialogRibbon>
        <DialogCanvas>
          <PlanDrawing />
        </DialogCanvas>
        <DialogFooter>
          <PushButton $primary>Aceptar</PushButton>
          <PushButton>Cancelar</PushButton>
        </DialogFooter>
      </DialogWindow>
    </Desktop>
  );
}

export default App
